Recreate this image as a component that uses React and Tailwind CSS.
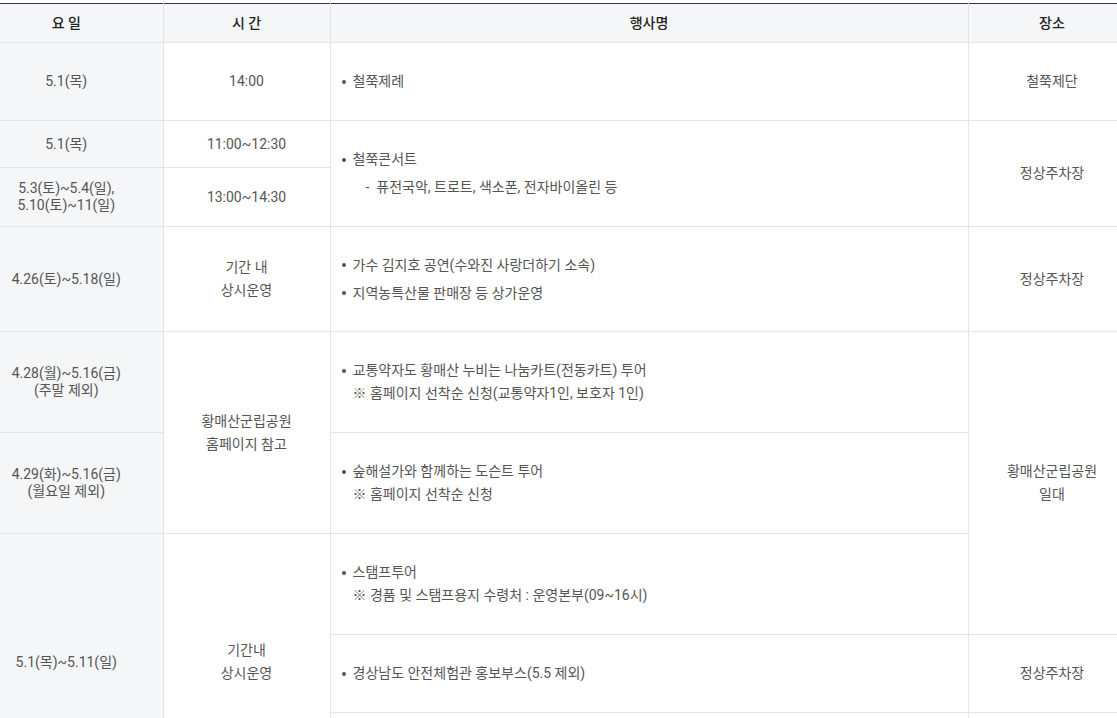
const font = { fontFamily: 'Roboto, "Noto Sans CJK KR", sans-serif' };

const th = "border-x border-b border-[#e4e4e4] bg-[#f5f6f8] text-[14px] font-medium text-[#222] text-center first:border-l-0 first:pr-[30px]";
const dayCell = "border border-[#e4e4e4] bg-[#f5f6f8] text-center text-[14px] leading-[17px] text-[#555] border-l-0 pr-[30px]";
const timeCell = "border border-[#e4e4e4] bg-white text-center text-[14px] leading-[23px] text-[#555]";
const eventCell = "border border-[#e4e4e4] bg-white text-left text-[14px] leading-[23px] text-[#555] pl-[10px]";
const placeCell = "border border-[#e4e4e4] bg-white text-center text-[14px] leading-[23px] text-[#555]";

function Bullet({ children, sub, first }) {
  return (
    <div className={first ? "" : "mt-[5px]"}>
      <div className="flex items-center">
        <span className="w-[12px] shrink-0 flex">
          <span className="block w-[4px] h-[4px] rounded-full bg-[#555] ml-[1px]" />
        </span>
        <span>{children}</span>
      </div>
      {sub && <div className="pl-[12px]">{sub}</div>}
    </div>
  );
}

export default function App() {
  return (
    <div className="w-[1117px] h-[718px] overflow-hidden bg-white pt-[3px]" style={font}>
      <table className="w-[1136px] border-collapse table-fixed border-t border-t-[#2f3445]">
        <colgroup>
          <col className="w-[163px]" />
          <col className="w-[167px]" />
          <col className="w-[638px]" />
          <col className="w-[168px]" />
        </colgroup>
        <thead>
          <tr className="h-[39px]">
            <th className={th}>요 일</th>
            <th className={th}>시 간</th>
            <th className={th}>행사명</th>
            <th className={th}>장소</th>
          </tr>
        </thead>
        <tbody>
          <tr className="h-[78px]">
            <td className={dayCell}>5.1(목)</td>
            <td className={timeCell}>14:00</td>
            <td className={eventCell}>
              <Bullet first>철쭉제례</Bullet>
            </td>
            <td className={placeCell}>철쭉제단</td>
          </tr>
          <tr className="h-[47px]">
            <td className={dayCell}>5.1(목)</td>
            <td className={timeCell}>11:00~12:30</td>
            <td className={eventCell} rowSpan={2}>
              <Bullet first>철쭉콘서트</Bullet>
              <div className="mt-[5px] pl-[25px]">-&nbsp;&nbsp;퓨전국악, 트로트, 색소폰, 전자바이올린 등</div>
            </td>
            <td className={placeCell} rowSpan={2}>정상주차장</td>
          </tr>
          <tr className="h-[59px]">
            <td className={dayCell}>
              5.3(토)~5.4(일),
              <br />
              5.10(토)~11(일)
            </td>
            <td className={timeCell}>13:00~14:30</td>
          </tr>
          <tr className="h-[105px]">
            <td className={dayCell}>4.26(토)~5.18(일)</td>
            <td className={timeCell}>
              기간 내
              <br />
              상시운영
            </td>
            <td className={eventCell}>
              <Bullet first>가수 김지호 공연(수와진 사랑더하기 소속)</Bullet>
              <Bullet>지역농특산물 판매장 등 상가운영</Bullet>
            </td>
            <td className={placeCell}>정상주차장</td>
          </tr>
          <tr className="h-[101px]">
            <td className={dayCell}>
              4.28(월)~5.16(금)
              <br />
              (주말 제외)
            </td>
            <td className={timeCell} rowSpan={2}>
              황매산군립공원
              <br />
              홈페이지 참고
            </td>
            <td className={eventCell}>
              <Bullet first sub="※ 홈페이지 선착순 신청(교통약자1인, 보호자 1인)">
                교통약자도 황매산 누비는 나눔카트(전동카트) 투어
              </Bullet>
            </td>
            <td className={placeCell} rowSpan={3}>
              황매산군립공원
              <br />
              일대
            </td>
          </tr>
          <tr className="h-[101px]">
            <td className={dayCell}>
              4.29(화)~5.16(금)
              <br />
              (월요일 제외)
            </td>
            <td className={eventCell}>
              <Bullet first sub="※ 홈페이지 선착순 신청">숲해설가와 함께하는 도슨트 투어</Bullet>
            </td>
          </tr>
          <tr className="h-[101px]">
            <td className={dayCell} rowSpan={3}>5.1(목)~5.11(일)</td>
            <td className={timeCell} rowSpan={3}>
              기간내
              <br />
              상시운영
            </td>
            <td className={eventCell}>
              <Bullet first sub="※ 경품 및 스탬프용지 수령처 : 운영본부(09~16시)">스탬프투어</Bullet>
            </td>
          </tr>
          <tr className="h-[78px]">
            <td className={eventCell}>
              <Bullet first>경상남도 안전체험관 홍보부스(5.5 제외)</Bullet>
            </td>
            <td className={placeCell}>정상주차장</td>
          </tr>
          <tr className="h-[78px]">
            <td className={eventCell}></td>
            <td className={placeCell}></td>
          </tr>
        </tbody>
      </table>
    </div>
  );
}
